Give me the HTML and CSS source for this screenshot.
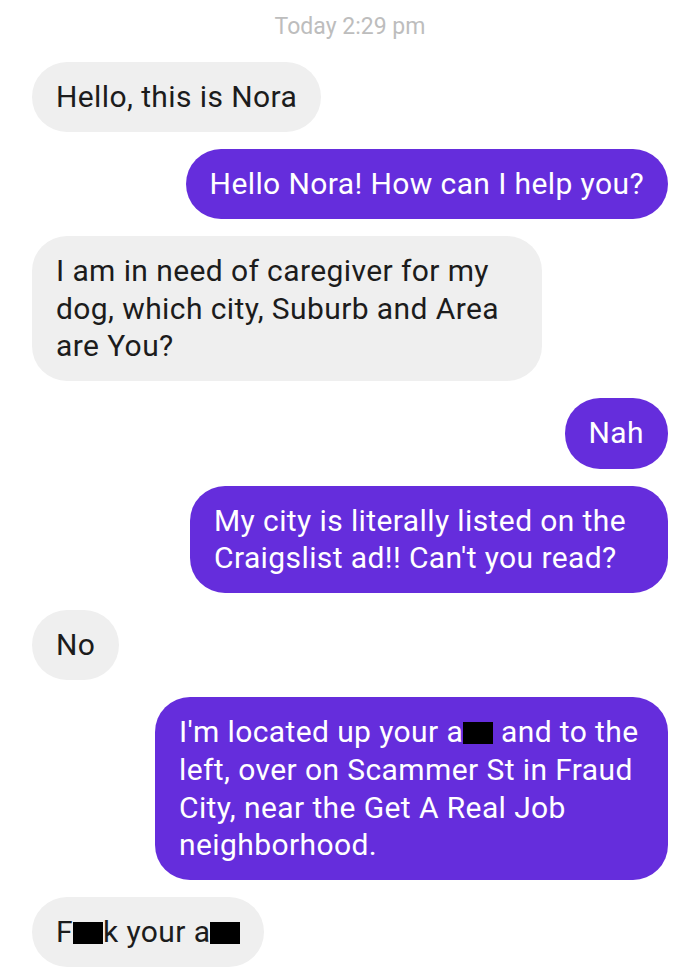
FILE: index.html
```html
<!DOCTYPE html>
<html>
<head>
<link rel="stylesheet" href="styles.css">
</head>
<body>
<div class="chat">
  <div class="stamp">Today 2:29 pm</div>

  <div class="msg in">Hello, this is Nora</div>
  <div class="msg out">Hello Nora! How can I help you?</div>
  <div class="msg in w510">I am in need of caregiver for my<br>dog, which city, Suburb and Area<br>are You?</div>
  <div class="msg out">Nah</div>
  <div class="msg out w478">My city is literally listed on the<br>Craigslist ad!! Can't you read?</div>
  <div class="msg in">No</div>
  <div class="msg out w513">I'm located up your a<span class="censor"></span> and to the<br>left, over on Scammer St in Fraud<br>City, near the Get A Real Job<br>neighborhood.</div>
  <div class="msg in">F<span class="censor"></span>k your a<span class="censor"></span></div>
</div>
</body>
</html>
```

FILE: styles.css
```css
* {box-sizing: border-box;}

body {
  margin: 0;
  background-color: #ffffff;
  font-family: Roboto, "Noto Sans", Arial, sans-serif;
}

.chat {
  display: flex;
  flex-direction: column;
  gap: 17px;
  padding: 10px 32px 0 32px;
}

.stamp {
  text-align: center;
  color: #bdbdbd;
  font-size: 23px;
  line-height: 34px;
  margin-bottom: 1px;
}

.msg {
  padding: 16px 24px 16.5px 24px;
  border-radius: 35px;
  font-size: 30px;
  letter-spacing: 0.4px;
  line-height: 37.6px;
  white-space: nowrap;
}

.msg.in {
  align-self: flex-start;
  background-color: #efefef;
  color: #1c1c1c;
}

.msg.out {
  align-self: flex-end;
  background-color: #652ddc;
  color: #ffffff;
}

.w510 {width: 510px;}
.w478 {width: 478px;}
.w513 {width: 513px;}

.censor {
  display: inline-block;
  width: 30px;
  height: 22px;
  background-color: #000;
  vertical-align: -2px;
}
```
